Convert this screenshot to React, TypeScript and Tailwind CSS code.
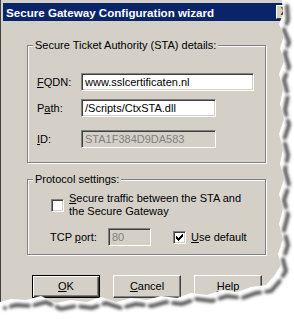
import type { ReactNode } from "react";

// outline of the torn paper (right edge, then bottom edge)
const EDGE =
  "M282 0 L283 14 L279 24 L284 36 L280 48 L284 61 L279 74 L283 89 L280 104 L284 119 L279 134 L283 149 L280 164 L284 179 L279 194 L283 209 L279 224 L283 239 L278 254 L281 265 L274 276 L266 285 L251 287 L237 292 L222 290 L207 295 L191 293 L177 298 L161 296 L147 300 L131 298 L116 302 L101 297 L87 302 L71 300 L56 303 L41 296 L26 300 L11 299 L0 302";
const PAPER = `${EDGE} L0 0 Z`;
const OUTSIDE = `M0 0 H294 V319 H0 Z ${PAPER}`;

const sunken =
  "border border-t-[#808080] border-l-[#808080] border-b-white border-r-white shadow-[inset_1px_1px_0_#404040,inset_-1px_-1px_0_#d4d0c8]";

function Key({ k }: { k: string }) {
  return <span className="underline underline-offset-[1px]">{k}</span>;
}

function Field({ value, width, disabled }: { value: string; width: string; disabled?: boolean }) {
  return (
    <div
      className={`${sunken} ${width} h-[18px] flex items-center pl-[3px] ${
        disabled ? "bg-[#d4d0c8] text-[#808080]" : "bg-white text-black"
      }`}
    >
      {value}
    </div>
  );
}

function Row({ label, children, className }: { label: ReactNode; children: ReactNode; className?: string }) {
  return (
    <div className={`flex items-center ${className ?? ""}`}>
      <span className="w-[44px]">{label}</span>
      {children}
    </div>
  );
}

const CHECK = [2, 3, 4, 3, 2, 1, 0];

function Check({ checked }: { checked?: boolean }) {
  return (
    <span className={`${sunken} w-[13px] h-[13px] shrink-0 bg-white flex items-center justify-center`}>
      {checked && (
        <svg width="7" height="7" viewBox="0 0 7 7" shapeRendering="crispEdges">
          {CHECK.map((y, x) => (
            <rect key={x} x={x} y={y} width="1" height="3" fill="#000" />
          ))}
        </svg>
      )}
    </span>
  );
}

function Button({ children, primary }: { children: ReactNode; primary?: boolean }) {
  return (
    <div
      className={`w-[68px] h-[23px] bg-[#d4d0c8] flex items-center justify-center border ${
        primary
          ? "border-black shadow-[inset_1px_1px_0_#fff,inset_-1px_-1px_0_#404040,inset_-2px_-2px_0_#808080]"
          : "border-t-white border-l-white border-b-[#404040] border-r-[#404040] shadow-[inset_-1px_-1px_0_#808080]"
      }`}
    >
      {children}
    </div>
  );
}

function Group({ title, children, className }: { title: string; children: ReactNode; className?: string }) {
  return (
    <fieldset
      className={`w-[239px] border border-[#808080] shadow-[inset_1px_1px_0_#fff,1px_1px_0_#fff] ${className ?? ""}`}
    >
      <legend className="ml-[5px] px-[2px] leading-[13px] bg-[#d4d0c8]">{title}</legend>
      {children}
    </fieldset>
  );
}

export default function App() {
  return (
    <div className="relative w-[294px] h-[319px] overflow-hidden bg-white font-['Liberation_Sans',Arial,sans-serif] text-[11px] leading-[13px] text-black">
      <div className="w-[294px] h-[319px] bg-[#d4d0c8] border-l border-[#404040] pt-[3px]">
        <div className="ml-[2px] h-[18px] bg-[#0a246a] flex items-center justify-between pl-[3px] pr-[2px]">
          <span className="text-white font-bold text-[11.6px]">Secure Gateway Configuration wizard</span>
          <span className="w-[16px] h-[14px] bg-[#d4d0c8] border border-t-white border-l-white border-b-[#404040] border-r-[#404040] flex items-center justify-center text-[10px] font-bold leading-none">
            X
          </span>
        </div>

        <div className="pl-[26px]">
          <Group title="Secure Ticket Authority (STA) details:" className="mt-[18px]">
            <div className="pl-[9px] pt-[21px] pb-[14px]">
              <Row label={<><Key k="F" />QDN:</>}>
                <Field value="www.sslcertificaten.nl" width="w-[173px]" />
              </Row>
              <Row label={<>P<Key k="a" />th:</>} className="mt-[8px]">
                <Field value="/Scripts/CtxSTA.dll" width="w-[135px]" />
              </Row>
              <Row label={<><Key k="I" />D:</>} className="mt-[13px]">
                <Field value="STA1F384D9DA583" width="w-[135px]" disabled />
              </Row>
            </div>
          </Group>

          <Group title="Protocol settings:" className="mt-[10px]">
            <div className="pt-[6px] pb-[8px]">
              <div className="flex items-center gap-[5px] pl-[23px]">
                <Check />
                <span>
                  <Key k="S" />ecure traffic between the STA and
                  <br />
                  the Secure Gateway
                </span>
              </div>
              <div className="flex items-center mt-[10px] pl-[22px]">
                <span className="w-[58px]">
                  TCP <Key k="p" />ort:
                </span>
                <Field value="80" width="w-[43px]" disabled />
                <div className="flex items-center gap-[5px] ml-[22px]">
                  <Check checked />
                  <span>
                    <Key k="U" />se default
                  </span>
                </div>
              </div>
            </div>
          </Group>

          <div className="flex gap-[13px] mt-[20px] ml-[5px]">
            <Button primary>
              <Key k="O" />K
            </Button>
            <Button>
              <Key k="C" />ancel
            </Button>
            <Button>
              <Key k="H" />elp
            </Button>
          </div>
        </div>
      </div>

      {/* torn paper edge with its drop shadow */}
      <svg className="absolute inset-0 pointer-events-none" width="294" height="319" viewBox="0 0 294 319">
        <defs>
          <clipPath id="outside">
            <path clipRule="evenodd" d={OUTSIDE} />
          </clipPath>
          <filter id="soft" x="-10%" y="-10%" width="120%" height="120%">
            <feGaussianBlur stdDeviation="1.8" />
          </filter>
        </defs>
        <path fill="#fff" fillRule="evenodd" d={OUTSIDE} />
        <g clipPath="url(#outside)">
          <path
            d={EDGE}
            transform="translate(5 6)"
            fill="none"
            stroke="#5a5a5a"
            strokeWidth="4"
            strokeDasharray="18 6"
            strokeLinecap="round"
            filter="url(#soft)"
          />
        </g>
      </svg>
    </div>
  );
}
